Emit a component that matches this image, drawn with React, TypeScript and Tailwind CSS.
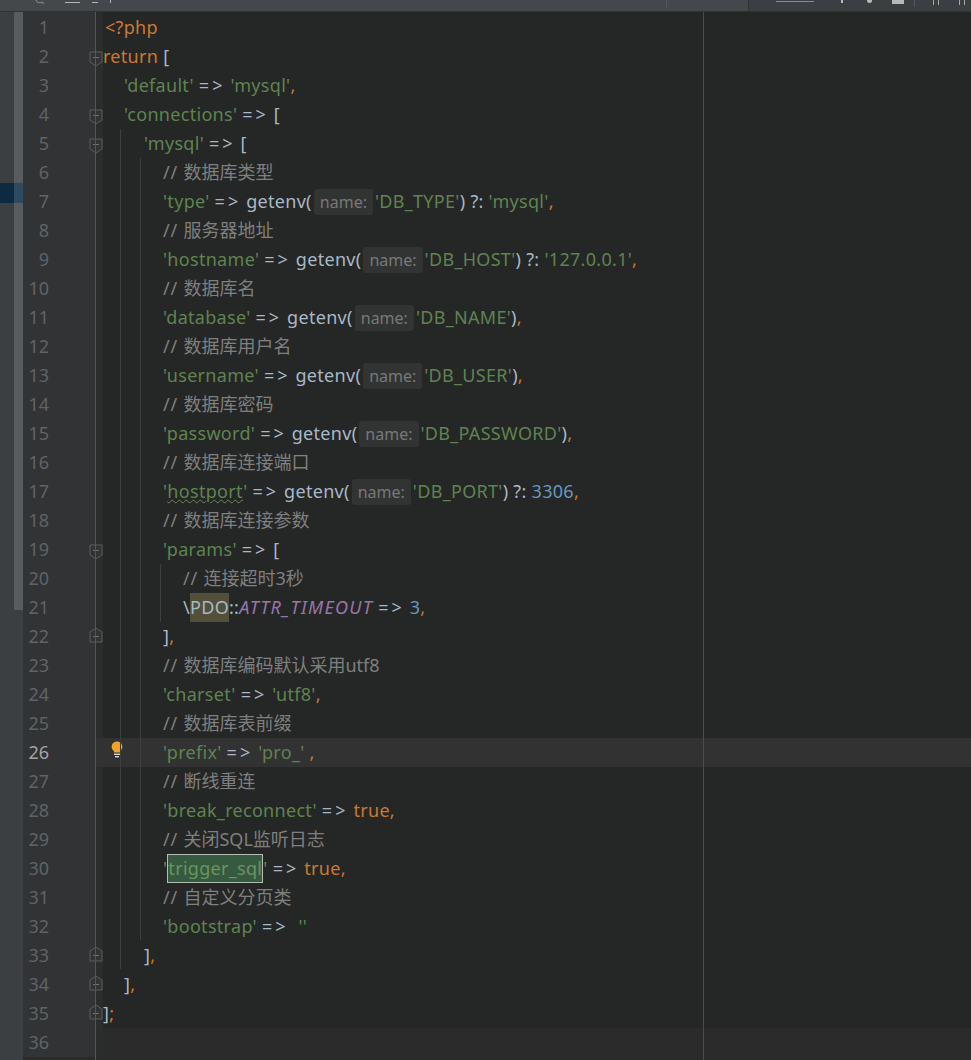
import React from 'react'

type Tok = [string, string?]

const str = 'text-[#5f8350]'
const op = 'text-[#a9b7c6]'
const kw = 'text-[#cc7832]'
const cmt = 'text-[#7f7f7f]'
const num = 'text-[#6897bb]'
const comma = 'text-[#cc7832]'

function Hint() {
  return (
    <span className="mx-[2px] inline-block h-[26px] rounded-[3px] bg-[#323433] px-[6px] align-baseline text-[16px] leading-[26px] tracking-normal text-[#787878]">
      name:
    </span>
  )
}

// the "=>" is drawn wider than the font gives it
function Ops({ text }: { text: string }) {
  const parts = text.split('=>')
  return (
    <span className={op}>
      {parts.map((p, i) => (
        <React.Fragment key={i}>
          {i > 0 && <span className="tracking-[3px]">{'=>'}</span>}
          {p}
        </React.Fragment>
      ))}
    </span>
  )
}

function Comment({ text }: { text: string }) {
  return (
    <span className={`${cmt} tracking-normal`}>
      <span className="tracking-[0.8px]">// </span>
      {text}
    </span>
  )
}

function Code({ toks }: { toks: Tok[] }) {
  return (
    <>
      {toks.map((t, i) => {
        if (t[0] === '@hint') return <Hint key={i} />
        if (!t[1]) return <Ops key={i} text={t[0]} />
        return (
          <span key={i} className={t[1]}>
            {t[0]}
          </span>
        )
      })}
    </>
  )
}

const lines: { pad: string; toks?: Tok[]; note?: string; custom?: React.ReactNode }[] = [
  { pad: 'pl-[2px]', toks: [['<?php', kw]] },
  { pad: 'pl-0', toks: [['return', kw], [' [']] },
  { pad: 'pl-[21px]', toks: [["'default'", str], [' => '], ["'mysql'", str], [',', comma]] },
  { pad: 'pl-[21px]', toks: [["'connections'", str], [' => [']] },
  { pad: 'pl-[41px]', toks: [["'mysql'", str], [' => [']] },
  { pad: 'pl-[60px]', note: '数据库类型' },
  { pad: 'pl-[60px]', toks: [["'type'", str], [' => getenv('], ['@hint'], ["'DB_TYPE'", str], [') ?: '], ["'mysql'", str], [',', comma]] },
  { pad: 'pl-[60px]', note: '服务器地址' },
  { pad: 'pl-[60px]', toks: [["'hostname'", str], [' => getenv('], ['@hint'], ["'DB_HOST'", str], [') ?: '], ["'127.0.0.1'", str], [',', comma]] },
  { pad: 'pl-[60px]', note: '数据库名' },
  { pad: 'pl-[60px]', toks: [["'database'", str], [' => getenv('], ['@hint'], ["'DB_NAME'", str], [')'], [',', comma]] },
  { pad: 'pl-[60px]', note: '数据库用户名' },
  { pad: 'pl-[60px]', toks: [["'username'", str], [' => getenv('], ['@hint'], ["'DB_USER'", str], [')'], [',', comma]] },
  { pad: 'pl-[60px]', note: '数据库密码' },
  { pad: 'pl-[60px]', toks: [["'password'", str], [' => getenv('], ['@hint'], ["'DB_PASSWORD'", str], [')'], [',', comma]] },
  { pad: 'pl-[60px]', note: '数据库连接端口' },
  {
    pad: 'pl-[60px]',
    custom: (
      <>
        <span className={str}>'</span>
        <span className={`${str} underline decoration-wavy decoration-[#6a8759] decoration-1`}>hostport</span>
        <span className={str}>'</span>
        <Code toks={[[' => getenv('], ['@hint'], ["'DB_PORT'", str], [') ?: '], ['3306', num], [',', comma]]} />
      </>
    ),
  },
  { pad: 'pl-[60px]', note: '数据库连接参数' },
  { pad: 'pl-[60px]', toks: [["'params'", str], [' => [']] },
  { pad: 'pl-[80px]', note: '连接超时3秒' },
  {
    pad: 'pl-[80px]',
    custom: (
      <>
        <span className={op}>\</span>
        <span className="inline-block h-[29px] bg-[#52503a] text-[#a9b7c6]">PDO</span>
        <span className={op}>::</span>
        <span className="tracking-[1.3px] text-[#9876aa] italic">ATTR_TIMEOUT</span>
        <Code toks={[[' => '], ['3', num], [',', comma]]} />
      </>
    ),
  },
  { pad: 'pl-[60px]', toks: [[']'], [',', comma]] },
  { pad: 'pl-[60px]', note: '数据库编码默认采用utf8' },
  { pad: 'pl-[60px]', toks: [["'charset'", str], [' => '], ["'utf8'", str], [',', comma]] },
  { pad: 'pl-[60px]', note: '数据库表前缀' },
  { pad: 'pl-[60px]', toks: [["'prefix'", str], [' => '], ["'pro_'", str], [' '], [',', comma]] },
  { pad: 'pl-[60px]', note: '断线重连' },
  { pad: 'pl-[60px]', toks: [["'break_reconnect'", str], [' => '], ['true', kw], [',', comma]] },
  { pad: 'pl-[60px]', note: '关闭SQL监听日志' },
  {
    pad: 'pl-[60px]',
    custom: (
      <>
        <span className={str}>'</span>
        <span className="inline-block h-[29px] border border-[#b4bcb4] bg-[#365a3f] leading-[27px] text-[#6a9460]">trigger_sql</span>
        <span className={str}>'</span>
        <Code toks={[[' => '], ['true', kw], [',', comma]]} />
      </>
    ),
  },
  { pad: 'pl-[60px]', note: '自定义分页类' },
  { pad: 'pl-[60px]', toks: [["'bootstrap'", str], [' =>  '], ["''", str]] },
  { pad: 'pl-[41px]', toks: [[']'], [',', comma]] },
  { pad: 'pl-[21px]', toks: [[']'], [',', comma]] },
  { pad: 'pl-0', toks: [[']'], [';', comma]] },
]

const foldDown = [2, 4, 5, 19]
const foldUp = [22, 33, 34, 35]

function Fold({ up }: { up: boolean }) {
  return (
    <svg width="14" height="16" viewBox="0 0 14 16" className={`absolute left-[66px] ${up ? 'top-[5px]' : 'top-[9px]'}`}>
      <path
        d={up ? 'M1 5 L7 1 L13 5 V15 H1 Z' : 'M1 1 H13 V11 L7 15 L1 11 Z'}
        fill="#313335"
        stroke="#5a5d5f"
        strokeWidth="1"
      />
      <path d={up ? 'M4 9.5 H10' : 'M4 6.5 H10'} stroke="#6e7173" strokeWidth="1" />
    </svg>
  )
}

function Bulb() {
  return (
    <svg width="12" height="17" viewBox="0 0 12 17" className="absolute top-[3px] left-[88px]">
      <path d="M6 0.5 A5.3 5.3 0 0 1 9 10.2 V11.5 H3 V10.2 A5.3 5.3 0 0 1 6 0.5 Z" fill="#f2a42a" />
      <rect x="3" y="12.6" width="6" height="1.4" fill="#d9d9d9" />
      <rect x="4" y="15" width="4" height="1.4" fill="#d9d9d9" />
    </svg>
  )
}

function Gutter({ n, current }: { n: number; current: boolean }) {
  return (
    <div className="relative flex h-[29px] w-[80px] shrink-0">
      <div className={`w-[73px] bg-[#313335] pr-[47px] text-right ${current ? 'text-[#a4a3a3]' : 'text-[#606366]'}`}>{n}</div>
      <div className={`w-[7px] ${current ? 'bg-[#323232]' : 'bg-[#2b2c2c]'}`} />
      {foldDown.includes(n) && <Fold up={false} />}
      {foldUp.includes(n) && <Fold up={true} />}
      {current && <Bulb />}
    </div>
  )
}

function TopBar() {
  return (
    <div className="flex h-[12px] shrink-0 items-start overflow-hidden border-b border-[#2f3132] bg-[#45484a]">
      <div className="flex w-[666px] items-start pl-[35px]">
        <svg width="10" height="4" viewBox="0 0 10 4">
          <path d="M1 0 A4 4 0 0 0 7 2 L9 4" fill="none" stroke="#7d8082" strokeWidth="1.2" />
        </svg>
        <div className="ml-[20px] flex items-start gap-[12px]">
          <div className="h-[1px] w-[15px] translate-y-[2px] bg-[#b4b7b9]" />
          <div className="h-[1px] w-[6px] translate-y-[2px] bg-[#b4b7b9]" />
          <div className="h-[3px] w-px bg-[#b4b7b9]" />
        </div>
      </div>
      <div className="h-[7px] w-px bg-[#55585a]" />
      <div className="w-[81px]" />
      <div className="flex h-[11px] flex-1 items-start border-l border-[#303233] bg-[#3c3f41]">
        <div className="mt-[1px] ml-[27px] h-px w-[38px] bg-[#8f8b80]" />
        <div className="ml-[27px] h-[3px] w-[2px] bg-[#b8b8b8]" />
        <div className="ml-[24px] h-[3px] w-[5px] rounded-b-sm bg-[#b8b8b8]" />
        <div className="ml-[20px] h-[4px] w-[12px] border border-[#b8b8b8] bg-[#b8b8b8]" />
        <div className="ml-[10px] h-[7px] w-px bg-[#55585a]" />
        <div className="ml-[18px] h-[5px] w-[6px] border-x border-[#a8a8a8]" />
        <div className="ml-[20px] h-[5px] w-[6px] border-x border-[#a8a8a8]" />
      </div>
    </div>
  )
}

function LeftStrip() {
  return (
    <div className="relative flex w-[23px] shrink-0 bg-[#3c3f41]">
      <div className="w-[14px]" />
      <div className="h-[598px] w-[9px] bg-[#595c5e]" />
      {/* current file marker */}
      <div className="absolute top-[171px] left-0 flex h-[20px] w-[23px]">
        <div className="w-[14px] bg-[#0d2a40]" />
        <div className="w-[9px] bg-[#2d4a60]" />
      </div>
    </div>
  )
}

export default function App() {
  return (
    <div
      className="flex h-[1060px] w-[971px] flex-col overflow-hidden bg-[#2b2b2b] text-[18px]"
      style={{ fontFamily: '"Noto Sans", "Noto Sans CJK SC", sans-serif' }}
    >
      <TopBar />
      <div className="flex min-h-0 flex-1">
        <LeftStrip />
        <div className="relative min-w-0 flex-1">
          <div className="bg-[#252726]">
            <div className="flex h-px">
              <div className="w-[73px] bg-[#313335]" />
              <div className="w-[7px] bg-[#2b2c2c]" />
            </div>
            {lines.map((ln, i) => {
              const n = i + 1
              const current = n === 26
              return (
                <div key={n} className={`flex h-[29px] leading-[29px] ${current ? 'bg-[#323232]' : ''}`}>
                  <Gutter n={n} current={current} />
                  <div className={`whitespace-pre tracking-[0.3px] ${ln.pad}`}>
                    {ln.note ? <Comment text={ln.note} /> : ln.custom ?? <Code toks={ln.toks || []} />}
                  </div>
                </div>
              )
            })}
          </div>
          <div className="flex h-[29px] leading-[29px]">
            <Gutter n={36} current={false} />
          </div>
          {/* fold line, indent guides and right margin */}
          <div className="absolute top-0 bottom-0 left-[72px] w-px bg-[#555759]" />
          <div className="absolute top-[117px] left-[97px] h-[840px] w-px bg-[#3d3f3e]" />
          <div className="absolute top-[146px] left-[117px] h-[782px] w-px bg-[#3d3f3e]" />
          <div className="absolute top-[552px] left-[137px] h-[58px] w-px bg-[#3d3f3e]" />
          <div className="absolute top-0 bottom-0 left-[680px] w-px bg-[#4b4c4c]" />
        </div>
      </div>
    </div>
  )
}
